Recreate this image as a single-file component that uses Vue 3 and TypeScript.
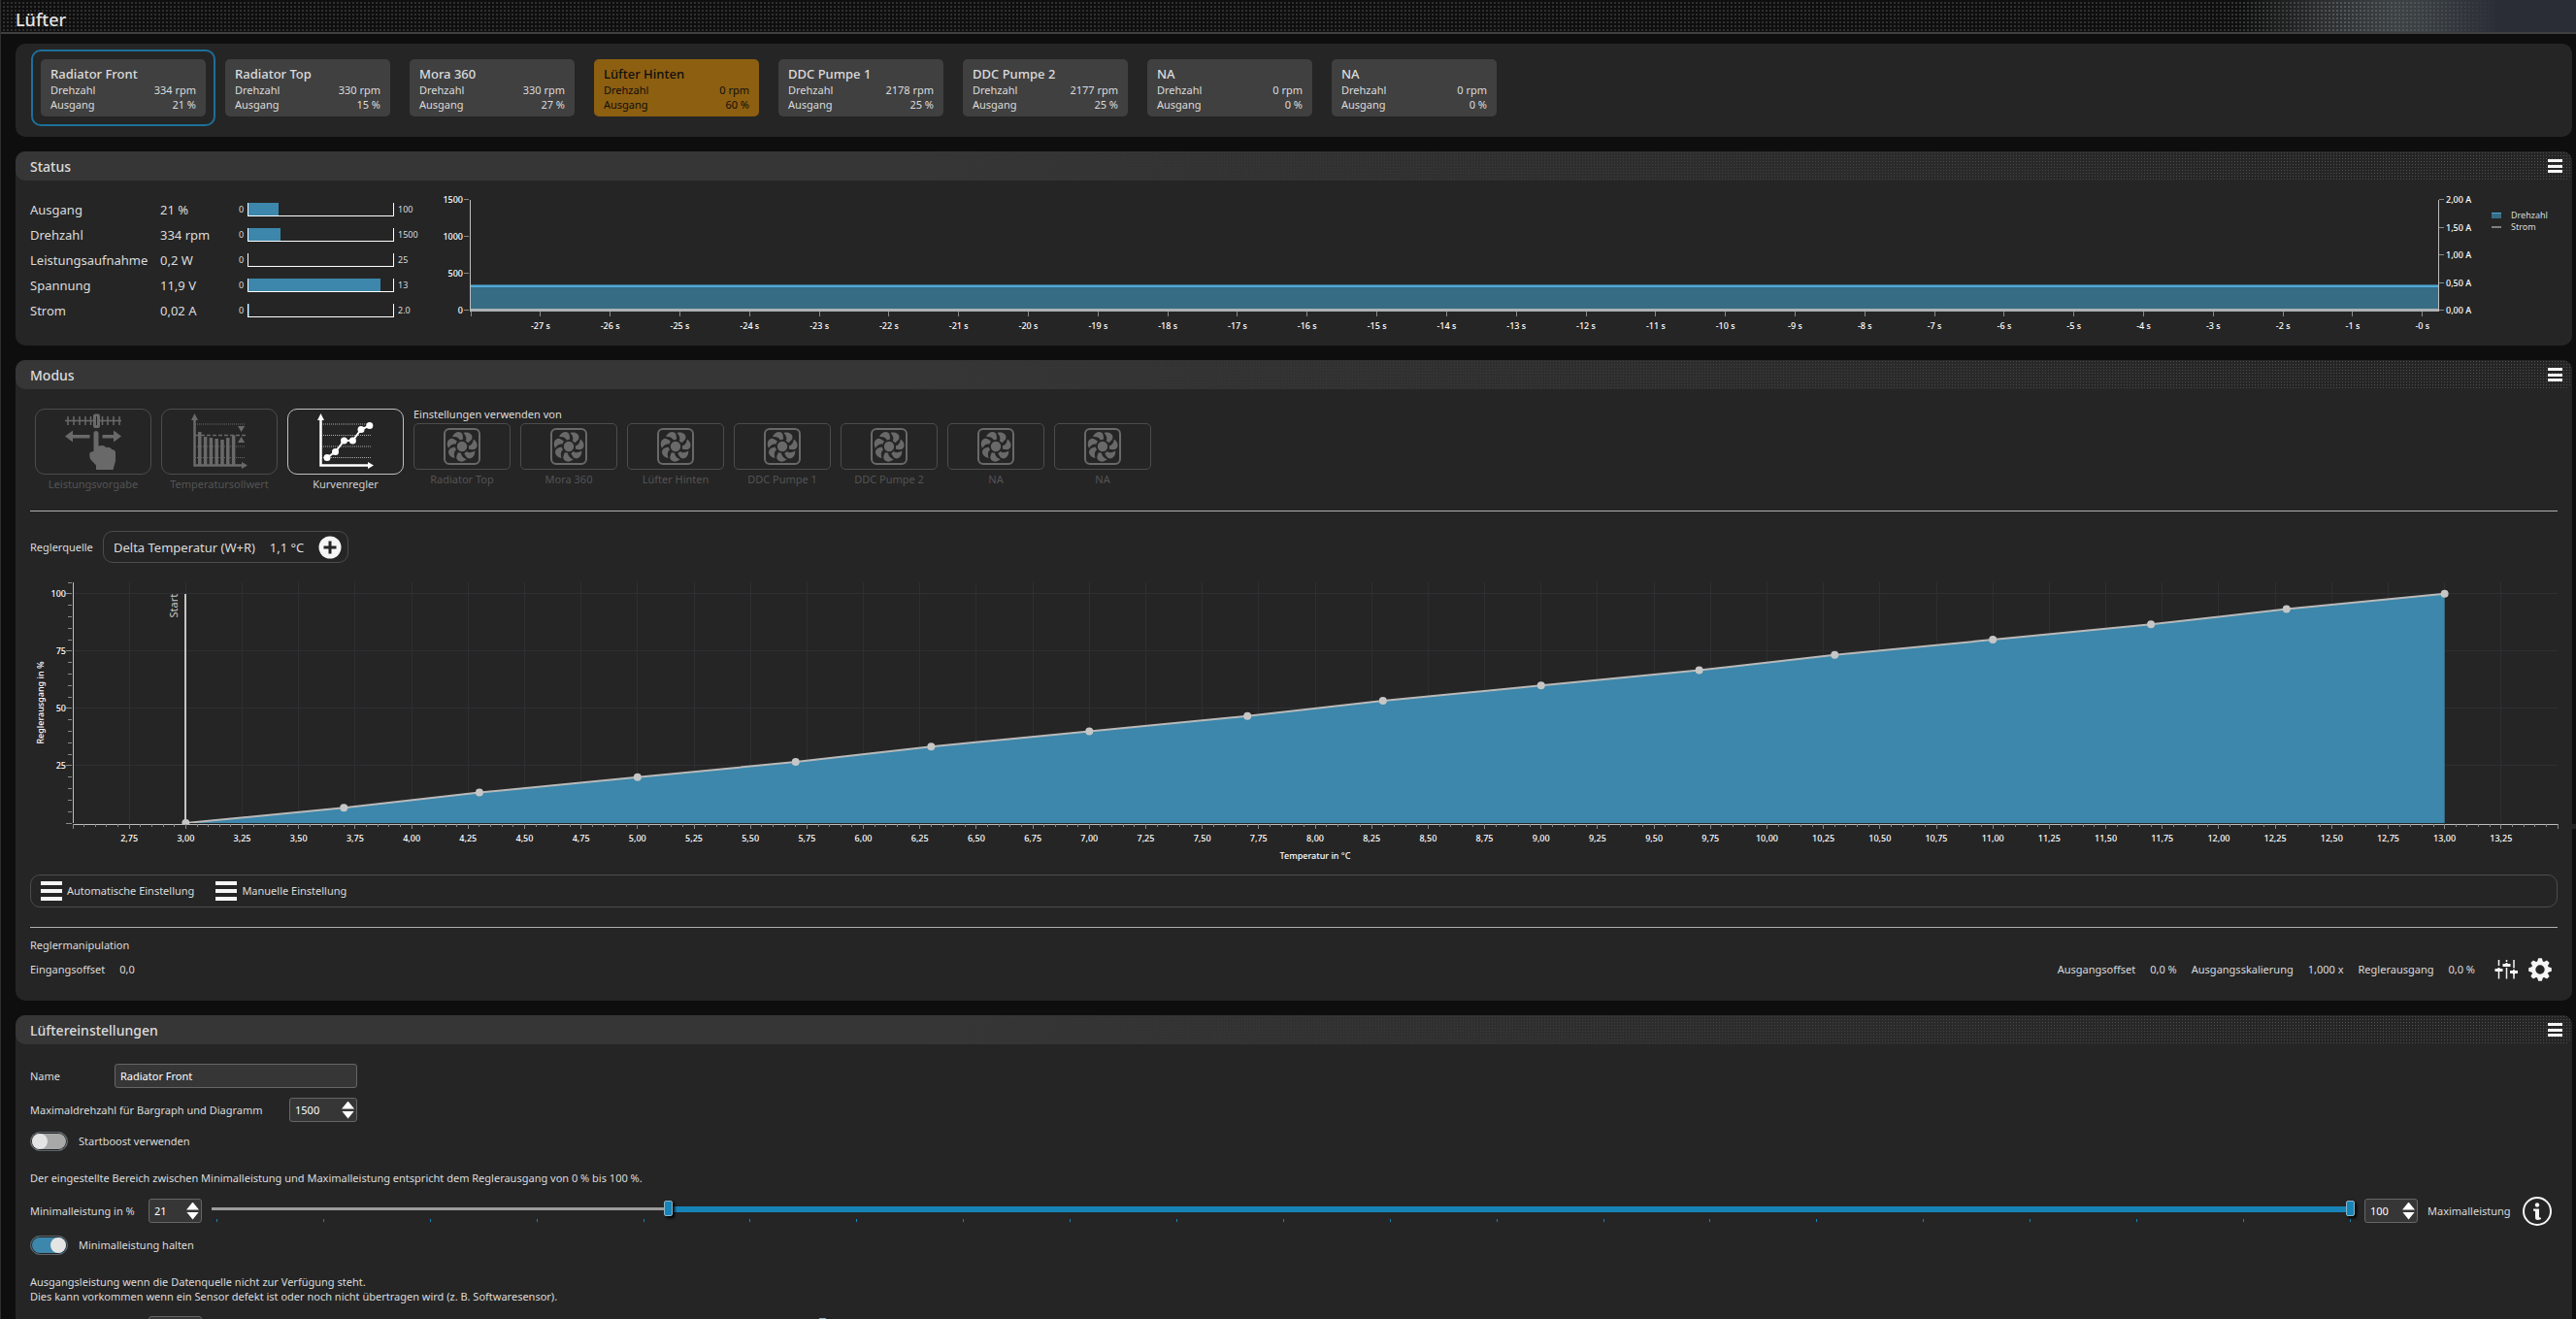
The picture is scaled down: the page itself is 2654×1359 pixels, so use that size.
<script setup lang="ts">
import { computed, ref } from 'vue'

interface Fan { name: string; rpm: number; output: number; alarm?: boolean }

const fans: Fan[] = [
  { name: 'Radiator Front', rpm: 334, output: 21 },
  { name: 'Radiator Top', rpm: 330, output: 15 },
  { name: 'Mora 360', rpm: 330, output: 27 },
  { name: 'Lüfter Hinten', rpm: 0, output: 60, alarm: true },
  { name: 'DDC Pumpe 1', rpm: 2178, output: 25 },
  { name: 'DDC Pumpe 2', rpm: 2177, output: 25 },
  { name: 'NA', rpm: 0, output: 0 },
  { name: 'NA', rpm: 0, output: 0 },
]
const selected = ref(0)
const others = computed(() => fans.filter((_, i) => i !== selected.value))

const readings = [
  { label: 'Ausgang', value: '21 %', max: '100', fill: 21 },
  { label: 'Drehzahl', value: '334 rpm', max: '1500', fill: 22 },
  { label: 'Leistungsaufnahme', value: '0,2 W', max: '25', fill: 0 },
  { label: 'Spannung', value: '11,9 V', max: '13', fill: 91 },
  { label: 'Strom', value: '0,02 A', max: '2.0', fill: 1 },
]

// Status history: 28 seconds, newest value at the right edge
const seconds = Array.from({ length: 29 }, (_, i) => 28 - i)
const secondX = (s: number) => `${99.2 - s * 3.541}%`
const rpmTicks = [1500, 1000, 500, 0]
const ampTicks = ['2,00 A', '1,50 A', '1,00 A', '0,50 A', '0,00 A']

// Controller curve
const T_MIN = 2.5
const T_SPAN = 11
const PLOT_H = 248
const tx = (t: number) => `${((t - T_MIN) / T_SPAN) * 100}%`
const oy = (o: number) => PLOT_H - (o / 105) * PLOT_H
const temps = [3, 3.7, 4.3, 5, 5.7, 6.3, 7, 7.7, 8.3, 9, 9.7, 10.3, 11, 11.7, 12.3, 13]
const curve = temps.map((t, i) => ({ t, o: (i * 100) / 15 }))
const curveLine = curve.map((p) => `${p.t},${105 - p.o}`).join(' ')
const majorT = Array.from({ length: 43 }, (_, i) => 2.75 + i * 0.25)
const minorT = Array.from({ length: 221 }, (_, i) => ({ t: 2.5 + i * 0.05, major: i % 5 === 0 }))
const minorO = Array.from({ length: 22 }, (_, i) => i * 5)
const fmt = (n: number) => n.toFixed(2).replace('.', ',')

const name = ref('Radiator Front')
const maxRpm = ref(1500)
const minPower = ref(21)
const maxPower = ref(100)
const lowRaw = ref(54)
const highRaw = ref(255)
const boost = ref(false)
const hold = ref(true)
const fallback = ref(26)
const blades = Array.from({ length: 7 }, (_, i) => `rotate(${(i * 360) / 7})`)
const teeth = Array.from({ length: 8 }, (_, i) => `rotate(${i * 45})`)
</script>

<template>
  <div class="app">
    <header class="top"><h1>Lüfter</h1></header>
    <main>
      <section class="panel cards" aria-label="Lüfterauswahl">
        <button v-for="(f, i) in fans" :key="i" class="card" :class="{ sel: i === selected, alarm: f.alarm }" @click="selected = i">
          <span class="card-in">
            <span class="card-title">{{ f.name }}</span>
            <span class="card-row"><span>Drehzahl</span><span>{{ f.rpm }} rpm</span></span>
            <span class="card-row"><span>Ausgang</span><span>{{ f.output }} %</span></span>
          </span>
        </button>
      </section>

      <section class="panel">
        <div class="head"><h2>Status</h2><button class="menu" aria-label="Menü"><i></i><i></i><i></i></button></div>
        <div class="status">
          <table class="readings">
            <tbody>
              <tr v-for="r in readings" :key="r.label">
                <th scope="row">{{ r.label }}</th>
                <td>{{ r.value }}</td>
                <td class="graph">
                  <div class="gauge">
                    <span class="g0">0</span>
                    <span class="bar"><span class="fill" :style="{ width: r.fill + '%' }"></span></span>
                    <span class="g1">{{ r.max }}</span>
                  </div>
                </td>
              </tr>
            </tbody>
          </table>
          <svg class="history" role="img" aria-label="Verlauf">
            <rect x="0" y="89" width="100%" height="27" fill="#366c84" />
            <rect x="0" y="88" width="100%" height="1" fill="#3c6f87" />
            <rect x="0" y="89" width="100%" height="2" fill="#4fa8d8" />
            <rect x="0" y="113" width="100%" height="3" fill="#acb1b3" />
            <g class="axis">
              <line x1="0" x2="0" y1="1" y2="116" />
              <line x1="100%" x2="100%" y1="1" y2="116" />
            </g>
            <g v-for="(v, i) in rpmTicks" :key="v">
              <line class="tick" x1="-6" x2="-1" :y1="i * 38 + 0.5" :y2="i * 38 + 0.5" />
              <text x="-7" :y="i * 38" text-anchor="end">{{ v }}</text>
            </g>
            <svg x="100%" overflow="visible">
              <g v-for="(v, i) in ampTicks" :key="v">
                <line class="tick" x1="1" x2="6" :y1="Math.round(i * 28.5) + 0.5" :y2="Math.round(i * 28.5) + 0.5" />
                <text x="8" :y="Math.round(i * 28.5)">{{ v }}</text>
              </g>
            </svg>
            <g v-for="s in seconds" :key="s">
              <line class="tick" :x1="secondX(s)" :x2="secondX(s)" y1="116" y2="121" />
              <text v-if="s < 28" :x="secondX(s)" y="130" text-anchor="middle">-{{ s }} s</text>
            </g>
          </svg>
          <ul class="legend">
            <li><span class="sw rpm"></span>Drehzahl</li>
            <li><span class="sw amp"></span>Strom</li>
          </ul>
        </div>
      </section>

      <section class="panel">
        <div class="head"><h2>Modus</h2><button class="menu" aria-label="Menü"><i></i><i></i><i></i></button></div>
        <div class="body mode-body">
          <div class="modes">
            <div class="mode off">
              <button aria-label="Leistungsvorgabe">
                <svg viewBox="0 0 60 60" width="60" height="60">
                  <path d="M1 8.500H59M4 4V13M10 4V13M16 4V13M22 4V13M27.500 4V13M39.500 4V13M45 4V13M51 4V13M57 4V13" stroke="currentColor" stroke-width="1.500" fill="none" />
                  <rect x="30" y="1.500" width="7" height="14.500" rx="2" fill="currentColor" />
                  <path d="M33.500 4V13" stroke="#252525" stroke-width="1" />
                  <path fill="currentColor" d="M1 24.500 9 18.500V23H26.500V26.500H9V30.500ZM59 24.500 51 18.500V23H39.500V26.500H51V30.500Z" />
                  <path fill="currentColor" d="M30.500 21.500a2.500 2.500 0 0 1 5 0V34.500L39.500 34Q42 34 43 36L46 35.700Q48.500 36.500 49.500 38.300Q53 38.200 53 42V50L50.500 59H33V54.500L27 48Q25.500 43 27 41L30.500 40Z" />
                </svg>
              </button>
              <span>Leistungsvorgabe</span>
            </div>
            <div class="mode off">
              <button aria-label="Temperatursollwert">
                <svg viewBox="0 0 60 60" width="60" height="60">
                  <path d="M5 12H57M5 35H57M5 46.500H57" stroke="currentColor" stroke-width="1" stroke-dasharray="1 1" />
                  <path d="M5 23.500H57" stroke="currentColor" stroke-width="1.500" stroke-dasharray="4 2" />
                  <path d="M4.500 6V54.500H55" stroke="currentColor" stroke-width="2.500" fill="none" />
                  <path fill="currentColor" d="M4.500 1 8 8H1ZM59 54.500 53 51V58Z" />
                  <path stroke="currentColor" stroke-width="3.500" d="M9.800 20V54M15.600 25V54M21.400 26V54M27.200 27V54M33 28V54M38.800 26V54M44.600 23.500V54" />
                  <path fill="currentColor" d="M49 14H56.200L52.600 20ZM49 31H56.200L52.600 25Z" />
                </svg>
              </button>
              <span>Temperatursollwert</span>
            </div>
            <div class="mode on">
              <button aria-label="Kurvenregler">
                <svg viewBox="0 0 60 60" width="60" height="60">
                  <path d="M5 12H57M5 23.500H57M5 35H57M5 46.500H57" stroke="#aaa" stroke-width="1" stroke-dasharray="1 1" />
                  <path d="M4.500 6V54.500H55" stroke="currentColor" stroke-width="2.500" fill="none" />
                  <path fill="currentColor" d="M4.500 1 8 8H1ZM59 54.500 53 51V58Z" />
                  <path stroke="currentColor" stroke-width="2" fill="none" d="M11 46.500 19.500 40.500 28.500 29H37.400L46 17.500 54.800 13.500" />
                  <g fill="currentColor"><circle cx="11" cy="46.500" r="3.500" /><circle cx="19.500" cy="40.500" r="3.500" /><circle cx="28.500" cy="29" r="3.500" /><circle cx="37.400" cy="29" r="3.500" /><circle cx="46" cy="17.500" r="3.500" /><circle cx="54.800" cy="13.500" r="3.500" /></g>
                </svg>
              </button>
              <span>Kurvenregler</span>
            </div>
            <div class="sources">
              <span class="src-title">Einstellungen verwenden von</span>
              <div class="src-row">
                <div v-for="(f, i) in others" :key="i" class="source">
                  <button :aria-label="f.name">
                    <svg viewBox="-19 -19 38 38" width="38" height="38">
                      <rect x="-18" y="-18" width="36" height="36" rx="5" fill="none" stroke="currentColor" stroke-width="2" />
                      <circle r="5.200" fill="currentColor" />
                      <path v-for="b in blades" :key="b" :transform="b" fill="currentColor" d="M1.500 -14C7 -15.500 10.500 -12.500 10.500 -9.500C10.500 -7 8.500 -5.800 6.500 -3.800L3.800 -5.800C5 -8 4.500 -11 1.500 -14Z" />
                    </svg>
                  </button>
                  <span>{{ f.name }}</span>
                </div>
              </div>
            </div>
          </div>

          <hr />

          <div class="source-line">
            <span class="lbl">Reglerquelle</span>
            <div class="pick">
              <span>Delta Temperatur (W+R)</span><span>1,1 °C</span>
              <button class="plus" aria-label="Quelle wählen">
                <svg viewBox="0 0 24 24" width="24" height="24"><circle cx="12" cy="12" r="11.500" fill="#f5f5f5" /><path d="M12 5.500V18.500M5.500 12H18.500" stroke="#252525" stroke-width="3" /></svg>
              </button>
            </div>
          </div>

          <svg class="curve" role="img" aria-label="Reglerkurve">
            <g class="grid">
              <line v-for="t in majorT" :key="t" :x1="tx(t)" :x2="tx(t)" y1="0" :y2="PLOT_H" />
              <line v-for="o in [25, 50, 75, 100]" :key="o" x1="0" x2="100%" :y1="oy(o)" :y2="oy(o)" />
            </g>
            <svg x="0" y="0" width="100%" :height="PLOT_H" viewBox="2.5 0 11 105" preserveAspectRatio="none">
              <polygon :points="`${curveLine} 13,105 3,105`" fill="#3c87ab" />
              <polyline :points="curveLine" fill="none" stroke="#b9b9b9" stroke-width="2" vector-effect="non-scaling-stroke" />
            </svg>
            <line :x1="tx(3)" :x2="tx(3)" :y1="oy(100)" :y2="PLOT_H" stroke="#c4c4c4" stroke-width="2" shape-rendering="crispEdges" />
            <circle v-for="p in curve" :key="p.t" :cx="tx(p.t)" :cy="oy(p.o)" r="4" fill="#c6c6c6" />
            <rect x="-1" :y="PLOT_H + 1" width="101%" height="5" fill="#252525" />
            <g class="axis">
              <line x1="0" x2="0" y1="0" :y2="PLOT_H" />
              <line x1="0" x2="100%" :y1="PLOT_H + 1" :y2="PLOT_H + 1" />
            </g>
            <line v-for="m in minorT" :key="m.t" class="tick" :x1="tx(m.t)" :x2="tx(m.t)" :y1="PLOT_H + 1" :y2="PLOT_H + (m.major ? 6 : 4)" />
            <line v-for="o in minorO" :key="o" class="tick" :x1="o % 25 ? -5 : -7" x2="-1" :y1="oy(o)" :y2="oy(o)" />
            <text v-for="t in majorT" :key="t" :x="tx(t)" :y="PLOT_H + 15" text-anchor="middle">{{ fmt(t) }}</text>
            <text v-for="o in [25, 50, 75, 100]" :key="o" x="-7" :y="oy(o)" text-anchor="end">{{ o }}</text>
            <text x="50%" :y="PLOT_H + 33" text-anchor="middle">Temperatur in °C</text>
            <text x="0" y="0" transform="translate(-34 124) rotate(-90)" text-anchor="middle">Reglerausgang in %</text>
            <svg :x="tx(3)" :y="oy(100)" overflow="visible"><text class="start" x="0" y="0" transform="rotate(-90) translate(0 -13)" text-anchor="end">Start</text></svg>
          </svg>

          <div class="tools">
            <button><span class="burger"><i></i><i></i><i></i></span>Automatische Einstellung</button>
            <button><span class="burger"><i></i><i></i><i></i></span>Manuelle Einstellung</button>
          </div>

          <hr />

          <p class="manip">Reglermanipulation</p>
          <div class="values">
            <span>Eingangsoffset</span><span>0,0</span>
            <span class="grow"></span>
            <span>Ausgangsoffset</span><span>0,0 %</span>
            <span>Ausgangsskalierung</span><span>1,000 x</span>
            <span>Reglerausgang</span><span>0,0 %</span>
            <button class="ico first" aria-label="Regler">
              <svg viewBox="0 0 24 24" width="24" height="24"><path d="M4.500 2V8M4.500 14V21.500M12.500 2V4M12.500 10V21.500M20 2V10.500M20 16.500V21.500" stroke="#f5f5f5" stroke-width="1.500" /><path d="M0.500 12.500H8.500M8.500 7.500H16.500M16 14.500H24" stroke="#f5f5f5" stroke-width="3" /><path d="M4.500 10V14M12.500 5V9M20 12V17" stroke="#f5f5f5" stroke-width="2" /></svg>
            </button>
            <button class="ico" aria-label="Einstellungen">
              <svg viewBox="-12 -12 24 24" width="24" height="24"><circle r="6.800" fill="none" stroke="#f5f5f5" stroke-width="4.200" /><path v-for="t in teeth" :key="t" :transform="t" fill="#f5f5f5" d="M-3 -8 -1.800 -11.800H1.800L3 -8Z" /></svg>
            </button>
          </div>
        </div>
      </section>

      <section class="panel last">
        <div class="head"><h2>Lüftereinstellungen</h2><button class="menu" aria-label="Menü"><i></i><i></i><i></i></button></div>
        <div class="body form">
          <div class="row"><label class="w-name" for="name">Name</label><input id="name" v-model="name" class="text" type="text" /></div>
          <div class="row">
            <label class="w-max" for="maxrpm">Maximaldrehzahl für Bargraph und Diagramm</label>
            <span class="spin wide"><input id="maxrpm" v-model="maxRpm" type="number" /><span class="arrows"><button class="up" aria-label="Mehr" @click="maxRpm++"></button><button class="down" aria-label="Weniger" @click="maxRpm--"></button></span></span>
          </div>
          <label class="row toggle"><input v-model="boost" type="checkbox" role="switch" />Startboost verwenden</label>
          <p class="note">Der eingestellte Bereich zwischen Minimalleistung und Maximalleistung entspricht dem Reglerausgang von 0 % bis 100 %.</p>
          <div class="row power">
            <label class="w-min" for="minp">Minimalleistung in %</label>
            <span class="spin"><input id="minp" v-model="minPower" type="number" /><span class="arrows"><button class="up" aria-label="Mehr" @click="minPower++"></button><button class="down" aria-label="Weniger" @click="minPower--"></button></span></span>
            <div class="range">
              <div class="track"><span class="active" :style="{ left: (lowRaw / 255) * 100 + '%', right: 100 - (highRaw / 255) * 100 + '%' }"></span></div>
              <input v-model="lowRaw" type="range" min="0" max="255" aria-label="Minimalleistung" />
              <input v-model="highRaw" type="range" min="0" max="255" aria-label="Maximalleistung" />
              <div class="marks"><i v-for="n in 21" :key="n"></i></div>
            </div>
            <span class="spin"><input id="maxp" v-model="maxPower" type="number" /><span class="arrows"><button class="up" aria-label="Mehr" @click="maxPower++"></button><button class="down" aria-label="Weniger" @click="maxPower--"></button></span></span>
            <label for="maxp" class="w-maxp">Maximalleistung</label>
            <button class="ico" aria-label="Info">
              <svg viewBox="0 0 30 30" width="30" height="30"><circle cx="15" cy="15" r="14" fill="none" stroke="#f5f5f5" stroke-width="2" /><circle cx="15" cy="8.500" r="2.200" fill="#f5f5f5" /><path fill="#f5f5f5" d="M11 12.500H17V20.500Q17 22 19 21.500V23Q17 24 15.500 24Q13 24 13 21.500V15L11 14.500Z" /></svg>
            </button>
          </div>
          <label class="row toggle"><input v-model="hold" type="checkbox" role="switch" />Minimalleistung halten</label>
          <p class="note two">Ausgangsleistung wenn die Datenquelle nicht zur Verfügung steht.<br />Dies kann vorkommen wenn ein Sensor defekt ist oder noch nicht übertragen wird (z. B. Softwaresensor).</p>
          <div class="row power">
            <label class="w-min" for="fb"></label>
            <span class="spin"><input id="fb" v-model="fallback" type="number" /><span class="arrows"><button class="up" aria-label="Mehr" @click="fallback++"></button><button class="down" aria-label="Weniger" @click="fallback--"></button></span></span>
            <div class="range single">
              <input v-model="fallback" type="range" min="0" max="100" aria-label="Ausgangsleistung" />
            </div>
          </div>
        </div>
      </section>
    </main>
  </div>
</template>

<style>
body { background: #0e0e0e; overflow: hidden; }
</style>

<style scoped>
* { box-sizing: border-box; }
.app { height: 100vh; overflow: hidden; display: flex; flex-direction: column; background: #0e0e0e; border-left: 1px solid #303030; color: #dcdcdc; font: 11px/16px "Noto Sans", "Open Sans", sans-serif; }
button, input { font: inherit; color: inherit; }
button { background: none; border: 0; padding: 0; cursor: pointer; }
h1, h2, p, ul { margin: 0; padding: 0; font-weight: 400; list-style: none; }

.top { flex: none; height: 35px; border-bottom: 2px solid #3f3f3f; padding: 7px 15px 0; position: relative;
  background: linear-gradient(90deg, #0f0f0f 87%, #2c2e2e 90%, #3d4244 93%, #3b4044 94%, #2a2d35 97%); }
.top::before { content: ""; position: absolute; inset: 2px 0 0 2px;
  background: conic-gradient(from 270deg at 2px 2px, #303030 90deg, transparent 0) 0 0 / 4px 4px;
  mask: linear-gradient(90deg, #000 88%, transparent 89%); }
.top::after { content: ""; position: absolute; inset: 2px 0 0 2px;
  background: conic-gradient(from 270deg at 2px 2px, #52585a 90deg, transparent 0) 0 0 / 4px 4px;
  mask: linear-gradient(90deg, transparent 86%, #000 91%, #000 93%, transparent 97%); }
.top h1 { position: relative; z-index: 1; font-size: 18px; font-weight: 500; line-height: 26px; color: #e4e4e4; }

main { padding: 10px 4px 0 15px; display: flex; flex-direction: column; gap: 15px; min-height: 0; }
.panel { flex: none; background: #252525; border-radius: 10px; }
.head { height: 30px; border-radius: 10px; display: flex; align-items: center; justify-content: space-between; padding: 0 10px 0 15px; position: relative; background: linear-gradient(90deg, #363636 35%, #252525 92%); overflow: hidden; }
.head::before { content: ""; position: absolute; inset: 1px 0 0 0; background: conic-gradient(from 270deg at 1px 1px, #505050 90deg, transparent 0) 0 0 / 3px 3px; mask: linear-gradient(90deg, transparent 35%, #000 92%); }
.head h2 { font-size: 14px; font-weight: 500; line-height: 20px; padding-top: 1px; }
.menu { position: relative; width: 15px; height: 14px; display: flex; flex-direction: column; justify-content: space-between; }
.menu i, .burger i { display: block; height: 3px; background: #f5f5f5; }
.burger i { height: 4px; }

.cards { display: flex; padding: 6px 16px 11px; }
.card { width: 190px; padding: 8px; border: 2px solid transparent; border-radius: 10px; text-align: left; }
.card.sel { border-color: #1c7099; }
.card-in { display: block; background: #404040; border-radius: 5px; padding: 7px 10px 5px; }
.alarm .card-in { background: #8d5f10; color: #0e0e0e; }
.card-title { display: block; font-size: 13px; font-weight: 500; line-height: 17px; }
.card-row { display: flex; justify-content: space-between; line-height: 15px; }

.status { display: flex; align-items: flex-start; padding: 17px 16px 23px 15px; }
.readings { border-spacing: 0; font-size: 13px; flex: none; width: 453px; table-layout: fixed; }
.readings tr { height: 26px; }
.readings th, .readings td { padding: 0; text-align: left; vertical-align: middle; font-weight: 400; width: 134px; }
.readings td { width: 78px; }
.readings td.graph { width: 241px; }
.gauge { display: flex; align-items: center; font-size: 9px; line-height: 14px; }
.g0 { width: 12px; padding-left: 3px; }
.g1 { padding-left: 4px; }
.bar { width: 151px; height: 14px; border: 1px solid #fff; border-top: 0; display: flex; }
.fill { background: #3c87ab; height: 13px; }
.history { flex: 1; min-width: 0; height: 126px; overflow: visible; margin-top: 2px; }
svg text { font-size: 9px; font-weight: 500; fill: #fff; dominant-baseline: central; }
.axis line { stroke: #bdbdbd; stroke-width: 1; shape-rendering: crispEdges; }
.tick { stroke: #8a8a8a; stroke-width: 1; shape-rendering: crispEdges; }
.legend { flex: none; width: 122px; padding: 13px 0 0 55px; font-size: 9px; line-height: 12px; }
.legend li { display: flex; align-items: center; gap: 10px; }
.sw { width: 10px; height: 6px; background: #366c84; border-top: 1px solid #4fa8d8; }
.sw.amp { height: 2px; background: #808080; border: 0; }

.body { padding: 18px 15px 20px; }
hr { height: 1px; border: 0; background: #b0b0b0; margin: 0; }
.modes { display: flex; align-items: flex-start; gap: 10px; padding: 0 0 19px 5px; }
.mode { margin-top: 2px; width: 120px; display: flex; flex-direction: column; align-items: center; gap: 2px; }
.mode button { width: 120px; height: 68px; border: 1px solid #4c4c4c; border-radius: 10px; display: flex; align-items: center; justify-content: center; color: #696969; }
.mode span, .source span { color: #545454; }
.mode.on button { border-color: #c0c0c0; color: #fff; }
.mode.on span { color: #cfcfcf; }
.sources { display: flex; flex-direction: column; gap: 1px; }
.src-row { display: flex; gap: 10px; }
.source { width: 100px; display: flex; flex-direction: column; align-items: center; gap: 2px; }
.source button { width: 100px; height: 48px; border: 1px solid #4c4c4c; border-radius: 5px; display: flex; align-items: center; justify-content: center; color: #696969; }
.source-line { display: flex; align-items: center; margin: 20px 0; }
.lbl { width: 75px; }
.pick { display: flex; align-items: center; border: 1px solid #4c4c4c; border-radius: 10px; height: 33px; padding: 0 6px 0 10px; font-size: 13px; width: 253px; justify-content: space-between; }
.plus, .ico { display: flex; flex: none; }
.curve { display: block; width: calc(100% - 44px); margin-left: 44px; height: 249px; overflow: visible; margin-bottom: 52px; }
.grid line { stroke: #2e2f33; stroke-width: 1; shape-rendering: crispEdges; }
svg text.start { font-size: 11px; font-weight: 400; fill: #c8c8c8; }
.tools { display: flex; gap: 22px; border: 1px solid #4c4c4c; border-radius: 10px; height: 34px; padding: 0 10px; margin-bottom: 20px; }
.tools button { display: flex; align-items: center; gap: 5px; }
.burger { width: 22px; height: 20px; display: flex; flex-direction: column; justify-content: space-between; }
.manip { padding: 10px 0 5px; }
.values { display: flex; align-items: center; gap: 15px; padding-right: 6px; }
.grow { flex: 1; }
.values .first { margin: 0 -4px 0 5px; }

.form { padding-top: 20px; display: flex; flex-direction: column; gap: 10px; }
.row { display: flex; align-items: center; }
.w-name { width: 87px; }
.w-max { width: 267px; }
.w-min { width: 122px; }
.w-maxp { width: 88px; }
.text { width: 250px; height: 25px; background: #363636; border: 1px solid #666; border-radius: 3px; padding: 0 5px; color: #fff; }
.spin { width: 55px; height: 25px; background: #363636; border: 1px solid #666; border-radius: 3px; display: flex; align-items: center; padding: 0 2px 0 5px; color: #fff; flex: none; }
.spin.wide { width: 70px; }
.spin input { flex: 1; min-width: 0; background: none; border: 0; padding: 0; appearance: textfield; outline: 0; }
.spin input::-webkit-inner-spin-button { display: none; }
.arrows { display: flex; flex-direction: column; gap: 2px; flex: none; }
.arrows button { width: 13px; height: 8px; background: #fff; }
.up { clip-path: polygon(50% 0, 100% 100%, 0 100%); }
.down { clip-path: polygon(0 0, 100% 0, 50% 100%); }
.toggle { gap: 11px; height: 20px; }
.toggle input { appearance: none; margin: 0; width: 39px; height: 20px; border: 1px solid #60656a; border-radius: 10px; padding: 1px; background: #a8a8a8; box-shadow: inset 0 0 0 1px #252525; display: flex; align-items: center; }
.toggle input::before { content: ""; width: 16px; height: 16px; border-radius: 8px; background: #e4e4e4; }
.toggle input:checked { background: #3c87ab; justify-content: flex-end; }
.note { padding-top: 10px; }
.note.two { line-height: 15px; }
.power { gap: 10px; height: 31px; padding-right: 6px; }
.power .w-min { margin-right: -10px; }
.range { flex: 1; position: relative; height: 30px; }
.track { margin: 10px 5px 0; height: 6px; position: relative; }
.track::before { content: ""; position: absolute; inset: 1px -5px 2px; background: #9c9c9c; }
.active { position: absolute; top: 0; bottom: 0; background: #1784b8; border: 0; }
.range input { appearance: none; position: absolute; inset: 2px 0 auto; width: 100%; height: 20px; margin: 0; background: none; pointer-events: none; }
.range input::-webkit-slider-thumb { appearance: none; pointer-events: auto; width: 9px; height: 16px; border: 1px solid #8fb4c6; border-radius: 2px; background: #1784b8; box-shadow: 2px 2px 3px #000; }
.marks { display: flex; justify-content: space-between; margin: 7px 4px 0 5px; }
.marks i { width: 1px; height: 3px; background: #1784b8; }
</style>
